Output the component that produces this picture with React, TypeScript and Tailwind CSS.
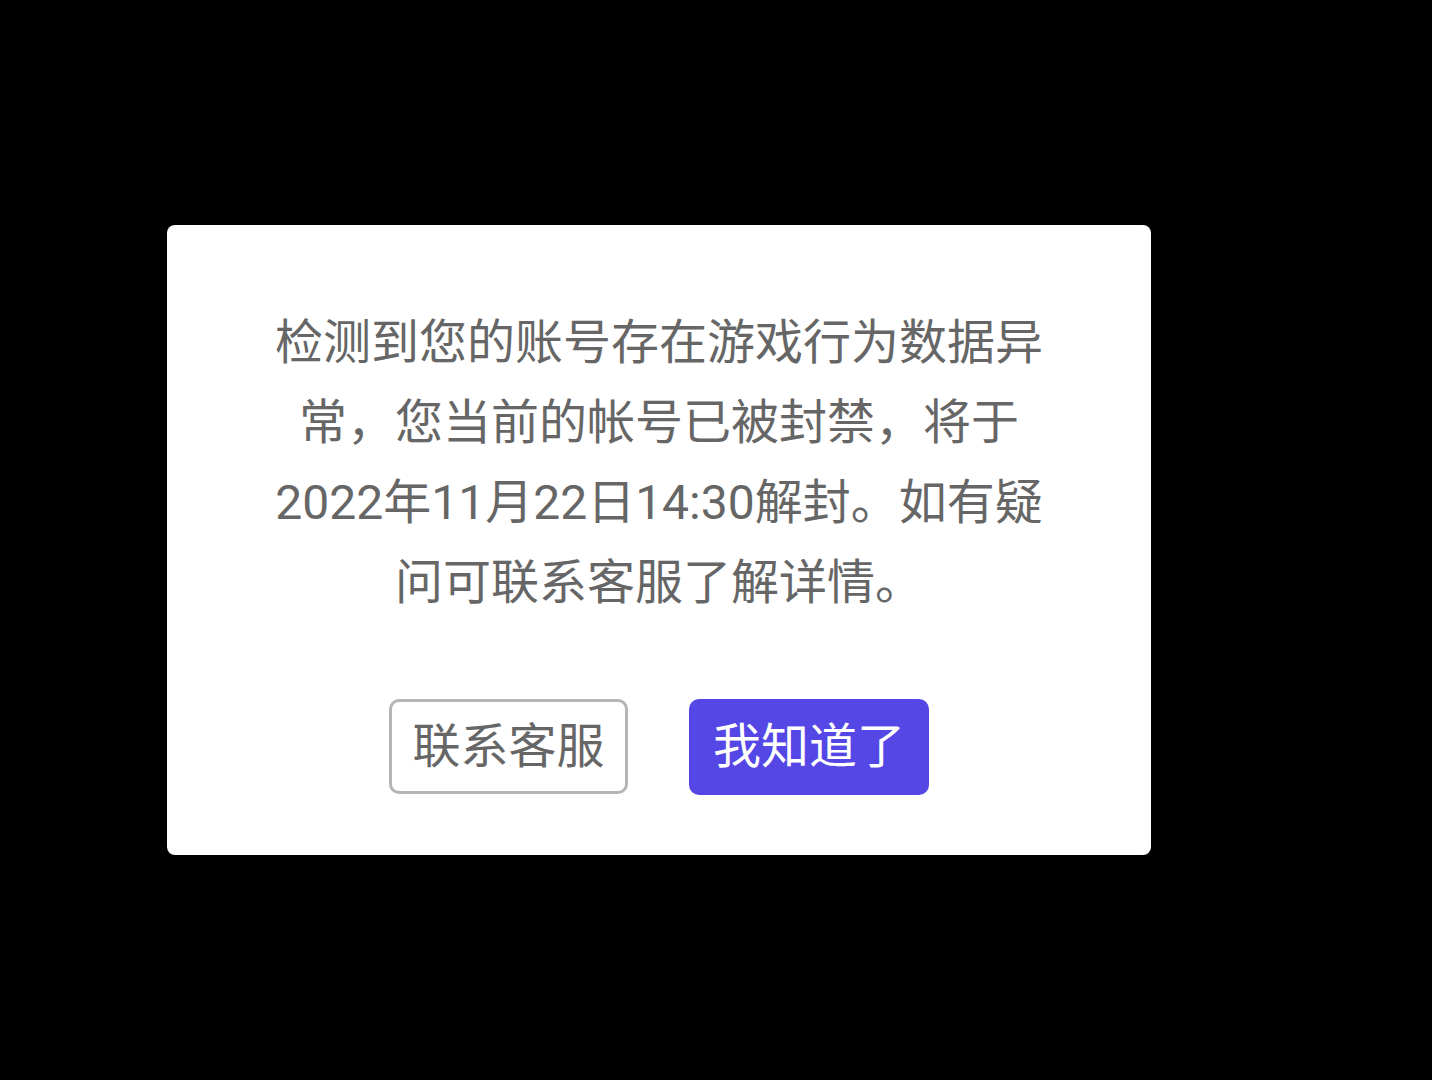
export default function App() {
  return (
    <div
      className="flex h-[1080px] w-full items-center justify-center bg-black"
      style={{ fontFamily: "Roboto, 'Noto Sans CJK SC', sans-serif" }}
    >
      <div className="ml-[-114px] flex h-[630px] w-[984px] flex-col items-center rounded-[8px] bg-white pt-[78px]">
        <p className="text-center text-[48px] leading-[80px] text-[#666666]">
          检测到您的账号存在游戏行为数据异
          <br />
          常，您当前的帐号已被封禁，将于
          <br />
          2022年11月22日14:30解封。如有疑
          <br />
          问可联系客服了解详情。
        </p>
        <div className="mt-[76px] flex gap-[61px]">
          <button className="flex h-[95px] w-[239px] items-center justify-center rounded-[10px] border-[3px] border-[#b5b5b5] bg-white text-[48px] text-[#666666]">
            联系客服
          </button>
          <button className="flex h-[96px] w-[240px] items-center justify-center rounded-[10px] bg-[#5447e6] text-[48px] text-white">
            我知道了
          </button>
        </div>
      </div>
    </div>
  );
}
